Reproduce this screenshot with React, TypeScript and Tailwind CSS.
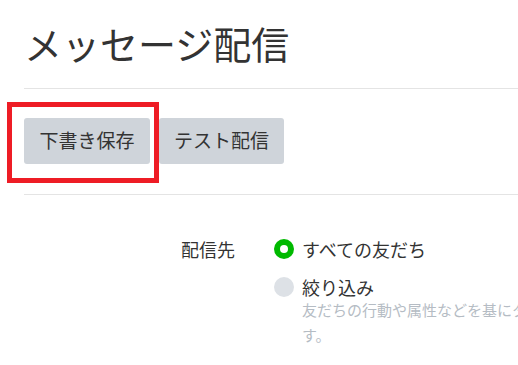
import React from "react";

const font = { fontFamily: '"Noto Sans CJK JP", "Noto Sans", sans-serif' };

export default function App() {
  return (
    <div className="relative h-[365px] w-[518px] overflow-hidden bg-white text-[#333]" style={font}>
      <div className="w-[760px] pl-6">
        <div className="flex h-[89px] items-center border-b border-[#e4e4e4] pb-[2px]">
          <h1 className="text-[38px] font-normal leading-none">メッセージ配信</h1>
        </div>
        <div className="flex h-[106px] items-center gap-[9px] border-b border-[#e4e4e4] pb-[2px]">
          <button className="h-[46px] w-[126px] rounded-[3px] bg-[#cfd4da] text-[19px] text-[#333]">下書き保存</button>
          <button className="h-[46px] w-[125px] rounded-[3px] bg-[#cfd4da] text-[19px] text-[#333]">テスト配信</button>
        </div>
        <div className="flex pt-[41px]">
          <div className="w-[250px] pl-[157px] text-[18px] leading-[26px]">配信先</div>
          <div className="flex flex-col">
            <label className="flex h-[26px] items-center gap-[8px] text-[18px]">
              <span className="flex h-5 w-5 items-center justify-center rounded-full bg-[#00b900]">
                <span className="h-2 w-2 rounded-full bg-white" />
              </span>
              すべての友だち
            </label>
            <label className="mt-[12px] flex h-[26px] items-center gap-[8px] text-[18px]">
              <span className="h-5 w-5 rounded-full bg-[#dde1e6]" />
              絞り込み
            </label>
            <p className="-mt-[3px] w-[465px] pl-[28px] text-[15px] leading-[25px] text-[#b5bcc4]">
              友だちの行動や属性などを基にターゲットを絞り込んで配信します。
            </p>
          </div>
        </div>
      </div>
      <div className="absolute left-[7px] top-[102px] h-[81px] w-[152px] border-[5px] border-[#ee1c25]" />
    </div>
  );
}
